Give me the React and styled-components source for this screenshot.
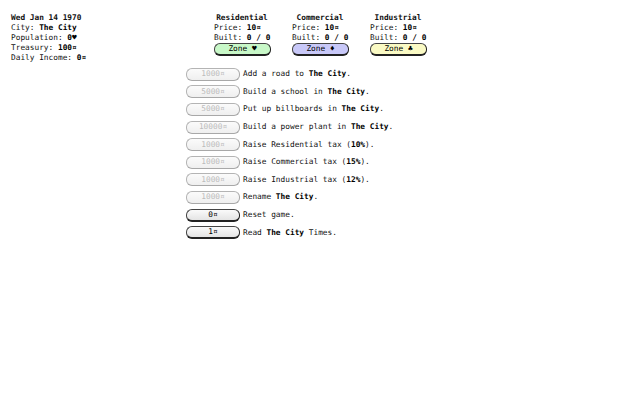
import React from "react";
import styled, { createGlobalStyle } from "styled-components";

const Global = createGlobalStyle`
  html, body { margin: 0; padding: 0; background: #fff; }
  body {
    font-family: "DejaVu Sans Mono", "Liberation Mono", monospace;
    font-size: 7.8px;
    line-height: 10px;
    color: #111;
  }
  b { color: #000; }
`;

const Page = styled.div`
  display: flex;
  align-items: flex-start;
  padding: 13px 0 0 11px;
`;

const Sidebar = styled.div`
  width: 175px;
  display: flex;
  flex-direction: column;
`;

const Line = styled.div`
  white-space: pre;
  font-weight: ${(p) => (p.$bold ? "bold" : "normal")};
`;

const Main = styled.div`
  display: flex;
  flex-direction: column;
`;

const Zones = styled.div`
  display: flex;
  gap: 22px;
  margin-left: 28px;
`;

const Zone = styled.div`
  width: 56px;
  display: flex;
  flex-direction: column;
`;

const ZoneTitle = styled.div`
  font-weight: bold;
  text-align: center;
  white-space: nowrap;
`;

const ZoneButton = styled.button`
  height: 13px;
  width: 57px;
  padding: 0;
  font-family: inherit;
  font-size: 7.8px;
  line-height: 10px;
  color: #000;
  background: ${(p) => p.$bg};
  border: 1px solid #444;
  border-right-color: #222;
  border-bottom: 2px solid #222;
  border-radius: 6px;
`;

const Actions = styled.div`
  display: flex;
  flex-direction: column;
  gap: 5px;
  margin-top: 12px;
`;

const Row = styled.div`
  display: flex;
  align-items: center;
  gap: 3px;
  height: 12.6px;
  white-space: pre;
`;

const ActionButton = styled.button`
  width: 54px;
  height: 13px;
  padding: 0;
  font-family: inherit;
  font-size: 7.8px;
  line-height: 10px;
  color: ${(p) => (p.disabled ? "#bcbcbc" : "#000")};
  background: ${(p) => (p.disabled ? "linear-gradient(#fbfbfb, #efefef)" : "linear-gradient(#fafafa, #e4e4e4)")};
  border: 1px solid ${(p) => (p.disabled ? "#b4b4b4" : "#444")};
  border-bottom: ${(p) => (p.disabled ? "1px solid #a8a8a8" : "2px solid #222")};
  border-right-color: ${(p) => (p.disabled ? "#a8a8a8" : "#222")};
  border-radius: 6px;
`;

const zones = [
  { name: "Residential", bg: "#c8f8c8", sym: "♥" },
  { name: "Commercial", bg: "#c8c8f8", sym: "♦" },
  { name: "Industrial", bg: "#fafac4", sym: "♣" },
];

const C = "\u00a4";

const actions = [
  { cost: "1000", dis: true, text: <>Add a road to <b>The City</b>.</> },
  { cost: "5000", dis: true, text: <>Build a school in <b>The City</b>.</> },
  { cost: "5000", dis: true, text: <>Put up billboards in <b>The City</b>.</> },
  { cost: "10000", dis: true, text: <>Build a power plant in <b>The City</b>.</> },
  { cost: "1000", dis: true, text: <>Raise Residential tax (<b>10%</b>).</> },
  { cost: "1000", dis: true, text: <>Raise Commercial tax (<b>15%</b>).</> },
  { cost: "1000", dis: true, text: <>Raise Industrial tax (<b>12%</b>).</> },
  { cost: "1000", dis: true, text: <>Rename <b>The City</b>.</> },
  { cost: "0", dis: false, text: <>Reset game.</> },
  { cost: "1", dis: false, text: <>Read <b>The City</b> Times.</> },
];

export default function App() {
  return (
    <>
      <Global />
      <Page>
        <Sidebar>
          <Line $bold>Wed Jan 14 1970</Line>
          <Line>City: <b>The City</b></Line>
          <Line>Population: <b>0♥</b></Line>
          <Line>Treasury: <b>100{C}</b></Line>
          <Line>Daily Income: <b>0{C}</b></Line>
        </Sidebar>
        <Main>
          <Zones>
            {zones.map((z) => (
              <Zone key={z.name}>
                <ZoneTitle>{z.name}</ZoneTitle>
                <Line>Price: <b>10{C}</b></Line>
                <Line>Built: <b>0 / 0</b></Line>
                <ZoneButton $bg={z.bg}>Zone <b>{z.sym}</b></ZoneButton>
              </Zone>
            ))}
          </Zones>
          <Actions>
            {actions.map((a, i) => (
              <Row key={i}>
                <ActionButton disabled={a.dis}>{a.cost}{C}</ActionButton>
                <span>{a.text}</span>
              </Row>
            ))}
          </Actions>
        </Main>
      </Page>
    </>
  );
}
